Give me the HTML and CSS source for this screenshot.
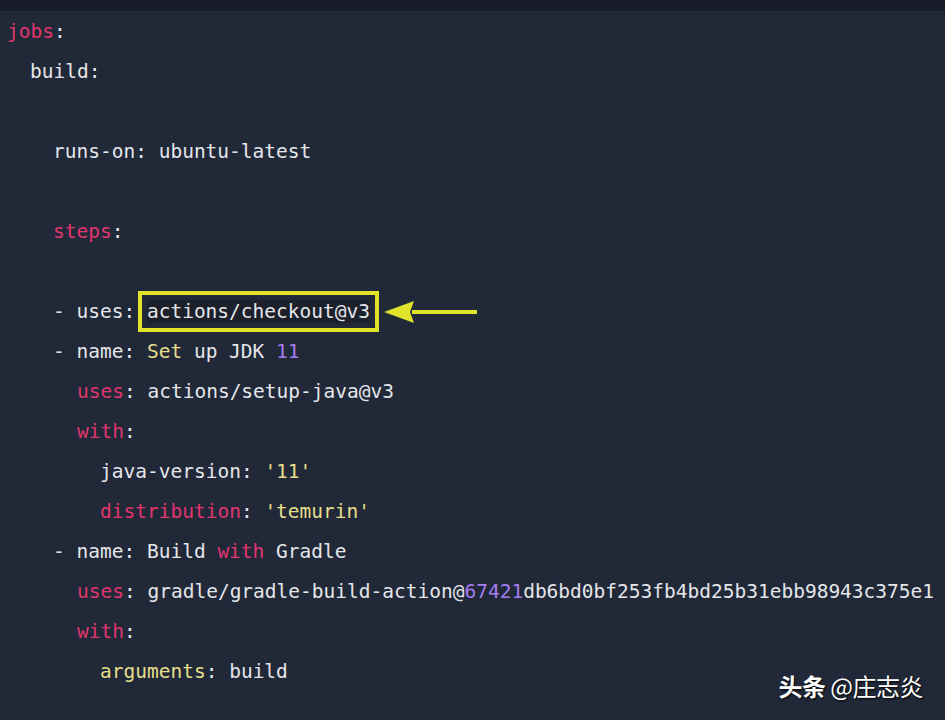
FILE: index.html
```html
<!DOCTYPE html>
<html>
<head>
<meta charset="utf-8">
<link rel="stylesheet" href="styles.css">
</head>
<body>
<div class="topbar"></div>
<div class="code">
  <div class="ln"><span class="k">jobs</span>:</div>
  <div class="ln i1">build:</div>
  <div class="ln"></div>
  <div class="ln i2">runs-on: ubuntu-latest</div>
  <div class="ln"></div>
  <div class="ln i2"><span class="k">steps</span>:</div>
  <div class="ln"></div>
  <div class="ln i2">- uses: <span class="box">actions/checkout@v3</span><svg class="arrow" width="96" height="24" viewBox="0 0 96 24"><path d="M28 12 H93" stroke="#dfe32a" stroke-width="4" fill="none"/><path d="M0 12 L30 1 L26 12 L30 23 Z" fill="#dfe32a"/></svg></div>
  <div class="ln i2">- name: <span class="s">Set</span> up JDK <span class="n">11</span></div>
  <div class="ln i3"><span class="k">uses</span>: actions/setup-java@v3</div>
  <div class="ln i3"><span class="k">with</span>:</div>
  <div class="ln i4">java-version: <span class="s">'11'</span></div>
  <div class="ln i4"><span class="k">distribution</span>: <span class="s">'temurin'</span></div>
  <div class="ln i2">- name: Build <span class="k">with</span> Gradle</div>
  <div class="ln i3"><span class="k">uses</span>: gradle/gradle-build-action@<span class="n">67421</span>db6bd0bf253fb4bd25b31ebb98943c375e1</div>
  <div class="ln i3"><span class="k">with</span>:</div>
  <div class="ln i4"><span class="s">arguments</span>: build</div>
</div>
<div class="wm"><b>头条</b> @庄志炎</div>
</body>
</html>
```
FILE: styles.css
```css
html, body {
  margin: 0;
  padding: 0;
  background: #212837;
  height: 720px;
  overflow: hidden;
}
.topbar {
  height: 11px;
  background: #181d29;
}
.code {
  padding-left: 7px;
  padding-top: 1px;
  font-family: "DejaVu Sans Mono", monospace;
  font-size: 19.5px;
  color: #e4e6ea;
}
.ln {
  height: 40px;
  line-height: 40px;
  white-space: pre;
}
.i1 { padding-left: 23px; }
.i2 { padding-left: 46px; }
.i3 { padding-left: 70px; }
.i4 { padding-left: 93px; }
.k { color: #e0366f; }
.s { color: #e7df8c; }
.n { color: #a47df0; }
.box {
  outline: 4px solid #dfe32a;
  outline-offset: 5px;
  background: #1b202b;
}
.arrow {
  vertical-align: middle;
  margin-left: 14px;
  position: relative;
  top: -1px;
}
.wm {
  position: absolute;
  right: 22px;
  top: 668px;
  font-family: "Noto Sans CJK SC", sans-serif;
  font-size: 24px;
  color: #ffffff;
  text-shadow: 1px 1px 2px #000;
  letter-spacing: -0.5px;
}
.wm b { font-weight: 700; }
```
